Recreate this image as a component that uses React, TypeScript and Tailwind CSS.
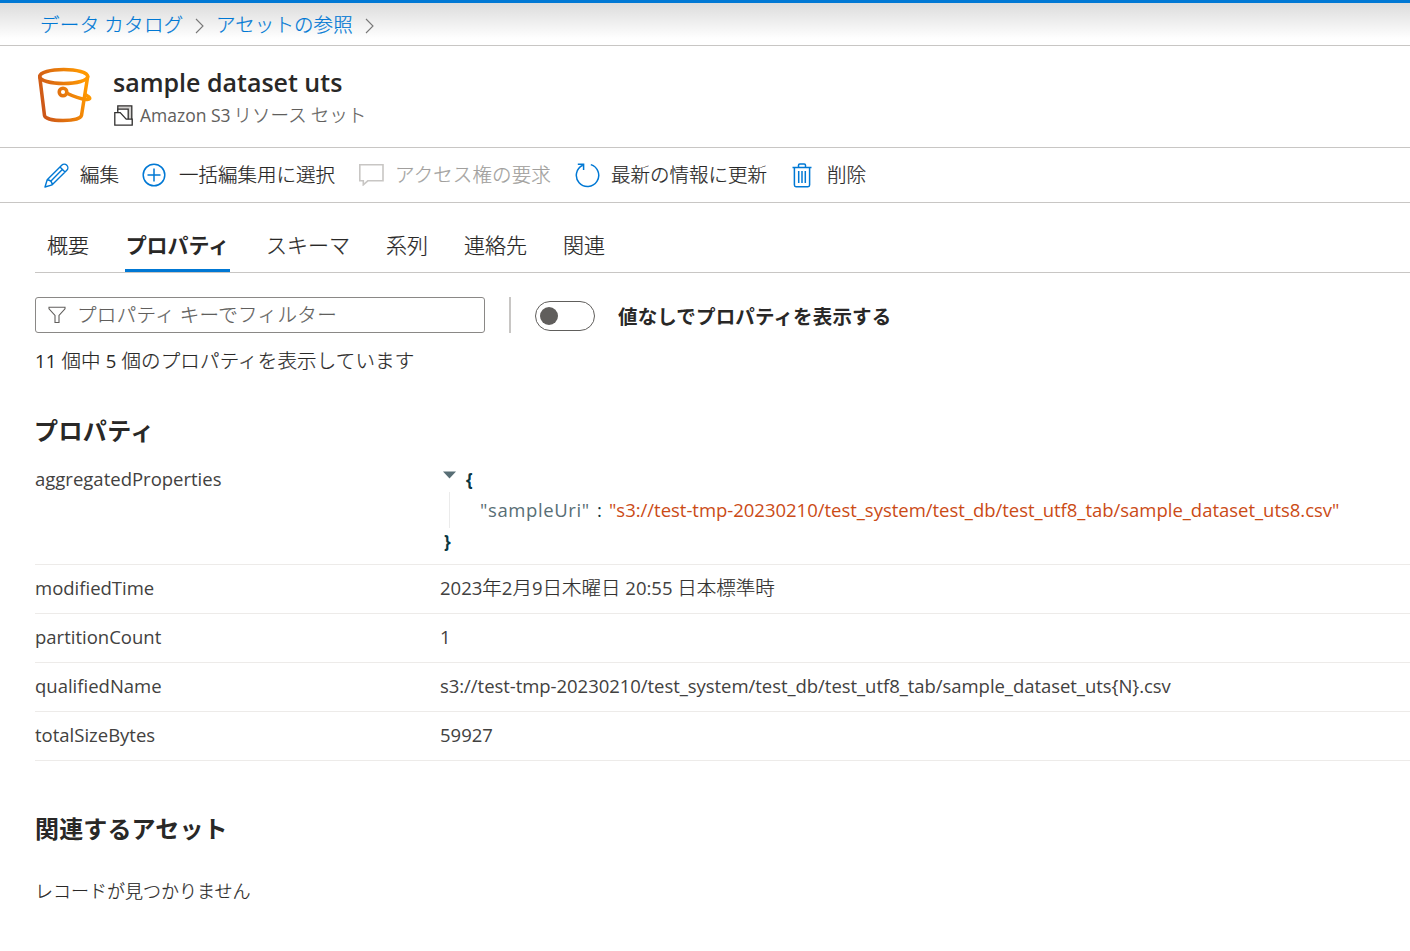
import React from "react";

const JP = "font-['Noto_Sans_CJK_JP',sans-serif]";
const LATIN = "font-['Open_Sans','Noto_Sans_CJK_JP',sans-serif]";
const THIN = "font-light [-webkit-text-stroke:0.2px]";

function Chevron() {
  return (
    <svg width="9" height="16" viewBox="0 0 9 16" fill="none" stroke="#777" strokeWidth="1.1">
      <path d="M1 1l7 7-7 7" />
    </svg>
  );
}

function BucketIcon() {
  return (
    <svg width="55" height="56" viewBox="0 0 55 56" fill="none" stroke="url(#bucket)" strokeWidth="3.5" strokeLinejoin="round" strokeLinecap="round">
      <defs>
        <linearGradient id="bucket" gradientUnits="userSpaceOnUse" x1="0" y1="40" x2="50" y2="25">
          <stop offset="0" stopColor="#c8511b" />
          <stop offset="1" stopColor="#ff9900" />
        </linearGradient>
      </defs>
      <ellipse cx="25.700" cy="9.500" rx="24" ry="7" />
      <path d="M1.700 9.500L6.500 48.500c.8 3 8 5 18.500 5s17.500-2 18.500-5L49.700 9.500" />
      <circle cx="25" cy="25" r="3.800" />
      <path d="M29 26.200c6 3 13 5.600 19 6.200 4 .4 4.800-1 2.200-3l-2.600-1.600" />
    </svg>
  );
}

function ResourceSetIcon() {
  return (
    <svg width="19" height="21" viewBox="0 0 19 21" fill="#fff" stroke="#323130" strokeWidth="1.300">
      <path d="M3.800 6V.8h14v19" fill="#d2d0ce" />
      <path d="M3.800 8V4.200h10.400v12" />
      <path d="M.8 20.200V7.600h5.400l6 6.600h6v6z" />
    </svg>
  );
}

function EditIcon() {
  return (
    <svg width="25" height="25" viewBox="0 0 25 25" fill="none" stroke="#0078d4" strokeWidth="1.400" strokeLinejoin="round">
      <path d="M1 24l2.200-7.200L17.700 2.200a3.550 3.550 0 0 1 5.100 5.100L8.200 21.800zM3.200 16.800c2.900.2 4.800 2.100 5 5M16 4l5 5M18.300 6.600L6.500 18.400" />
    </svg>
  );
}

function AddIcon() {
  return (
    <svg width="24" height="24" viewBox="0 0 24 24" fill="none" stroke="#0078d4" strokeWidth="1.500">
      <circle cx="12" cy="12" r="10.800" />
      <path d="M12 5.500v13M5.500 12h13" />
    </svg>
  );
}

function CommentIcon() {
  return (
    <svg width="25" height="22" viewBox="0 0 25 22" fill="none" stroke="#c8c6c4" strokeWidth="1.600">
      <path d="M.8.800h23.200v16H8.800L4.300 20.800v-4H.8z" />
    </svg>
  );
}

function RefreshIcon() {
  return (
    <svg width="25" height="25" viewBox="0 0 25 25" fill="none" stroke="#0078d4" strokeWidth="1.500">
      <path d="M15.800 1.600A11.200 11.200 0 1 1 7.700 2.200M2.800 1.200h5.800V7" />
    </svg>
  );
}

function DeleteIcon() {
  return (
    <svg width="20" height="25" viewBox="0 0 20 25" fill="none" stroke="#0078d4" strokeWidth="1.500">
      <path d="M.5 4.400h19M6.500 4.400V2.200c0-.8.500-1.300 1.300-1.300h4.400c.8 0 1.300.5 1.300 1.300v2.200M2.400 4.400v17.700c0 1 .6 1.600 1.600 1.600h12c1 0 1.600-.6 1.600-1.600V4.400M6.700 8v12M10 8v12M13.300 8v12" />
    </svg>
  );
}

function FilterIcon() {
  return (
    <svg className="-mt-px" width="18" height="18" viewBox="0 0 18 18" fill="none" stroke="#605e5c" strokeWidth="1.100">
      <path d="M1 1.200h16v1.600l-6 6.700v7H7v-7L1 2.800z" />
    </svg>
  );
}

function Tab({ label, active, className }: { label: string; active?: boolean; className: string }) {
  return (
    <div className={`flex h-[69px] justify-center text-[21px] leading-[83px] whitespace-nowrap ${active ? "border-b-3 border-[#0078d4] font-bold" : THIN} ${className}`}>
      {label}
    </div>
  );
}

function Row({ name, children }: { name: string; children: React.ReactNode }) {
  return (
    <div className={`flex h-[49px] border-b border-[#edebe9] text-[18.5px] leading-[45px] text-[#424140] ${LATIN}`}>
      <div className="w-[405px] shrink-0">{name}</div>
      <div className="whitespace-nowrap">{children}</div>
    </div>
  );
}

function Kanji({ children }: { children: string }) {
  return <span className={`text-[19.5px] leading-none text-[#323130] ${THIN}`}>{children}</span>;
}

export default function App() {
  return (
    <div className={`h-[951px] w-[1410px] overflow-hidden bg-white text-[#292827] ${JP}`}>
      <nav className={`flex h-[46px] items-center border-t-3 border-b border-t-[#0078d4] border-b-[#c8c6c4] bg-linear-to-b from-[#dcdcdc] to-white to-85% pl-10 text-[19.5px] leading-[40px] text-[#0078d4] ${THIN}`}>
        <span className="w-[155px] tracking-[0.350px] whitespace-nowrap">データ カタログ</span>
        <span className="mt-[3px] w-[21px]"><Chevron /></span>
        <span className="w-[149px] tracking-[0.100px] whitespace-nowrap">アセットの参照</span>
        <span className="mt-[3px]"><Chevron /></span>
      </nav>

      <header className="flex h-[102px] border-b border-[#c8c6c4] pt-[21px] pl-[38px]">
        <BucketIcon />
        <div className="ml-[20px]">
          <h1 className={`h-[34px] text-[25px] leading-[31px] font-semibold ${LATIN}`}>sample dataset uts</h1>
          <div className="ml-px flex h-[28px] items-center gap-[7px] text-[#605e5c]">
            <ResourceSetIcon />
            <div className="flex items-baseline gap-[3px] leading-[27px] whitespace-nowrap">
              <span className={`text-[17.5px] ${LATIN}`}>Amazon S3</span>
              <span className={`text-[18.5px] ${THIN}`}>リソース セット</span>
            </div>
          </div>
        </div>
      </header>

      <div className={`flex h-[55px] items-center border-b border-[#c8c6c4] pl-[44px] text-[19.5px] leading-[50px] whitespace-nowrap ${THIN}`}>
        <EditIcon />
        <span className="-mt-[2px] ml-[11px] w-[62px]">編集</span>
        <AddIcon />
        <span className="-mt-[2px] ml-[13px] w-[180px]">一括編集用に選択</span>
        <CommentIcon />
        <span className="-mt-[2px] ml-[11px] w-[180px] tracking-[0.100px] text-[#a19f9d]">アクセス権の要求</span>
        <RefreshIcon />
        <span className="-mt-[2px] ml-[11px] w-[181px]">最新の情報に更新</span>
        <DeleteIcon />
        <span className="-mt-[2px] ml-[15px]">削除</span>
      </div>

      <main className="pl-[35px]">
        <div className="flex h-[70px] border-b border-[#c8c6c4] pl-[12px]">
          <Tab label="概要" className="w-[42px]" />
          <Tab label="プロパティ" active className="ml-[36px] w-[105px]" />
          <Tab label="スキーマ" className="ml-[36px] w-[84px]" />
          <Tab label="系列" className="ml-[36px] w-[42px]" />
          <Tab label="連絡先" className="ml-[36px] w-[63px]" />
          <Tab label="関連" className="ml-[36px] w-[42px]" />
        </div>

        <div className="mt-6 flex h-9 items-center">
          <div className={`flex h-9 w-[450px] items-center gap-[11px] rounded-[3px] border border-[#8a8886] pl-[12px] text-[19.5px] leading-[30px] text-[#605e5c] ${THIN}`}>
            <FilterIcon />
            <span className="-mt-[2px] tracking-[0.350px]">プロパティ キーでフィルター</span>
          </div>
          <div className="ml-6 h-9 w-[2px] bg-[#c8c6c4]" />
          <div className="mt-[2px] ml-6 flex h-[30px] w-[60px] items-center rounded-full border border-[#605e5c] pl-[4px]">
            <div className="size-[18px] rounded-full bg-[#605e5c]" />
          </div>
          <span className="mt-[2px] ml-[23px] text-[19.5px] tracking-[0.150px] font-bold whitespace-nowrap">値なしでプロパティを表示する</span>
        </div>

        <p className={`mt-[12px] h-[31px] text-[19.5px] leading-[30px] tracking-[0.150px] ${THIN}`}>
          <span className={`text-[18.5px] ${LATIN} font-normal [-webkit-text-stroke:0]`}>11 </span>個中
          <span className={`text-[18.5px] ${LATIN} font-normal [-webkit-text-stroke:0]`}> 5 </span>個のプロパティを表示しています
        </p>

        <h2 className="mt-[36px] -ml-px h-[36px] text-[24px] leading-[36px] font-bold tracking-[0.400px]">プロパティ</h2>

        <section className="mt-[7px]">
          <div className={`flex h-[110px] border-b border-[#edebe9] text-[18.5px] text-[#424140] ${LATIN}`}>
            <div className="w-[405px] shrink-0 pt-[8px] leading-[32px]">aggregatedProperties</div>
            <div className="pt-[8px] leading-[32px] whitespace-nowrap text-[#073642]">
              <div className="flex h-[29px]">
                <svg className="mt-[8px] ml-[3px]" width="13" height="8" viewBox="0 0 13 8"><path d="M0 .5h13L6.500 7.500z" fill="#586e75" /></svg>
                <b className="mt-px ml-[10px] text-[17px]">{"{"}</b>
              </div>
              <div className="ml-[9px] flex h-[36px] border-l border-[#ebebeb] pl-[30px] leading-[36px]">
                <span className="w-[109px] tracking-[0.600px] text-[#586e75]">"sampleUri"</span>
                <span className="ml-[8px] w-[12px]">:</span>
                <span className="tracking-[-0.020px] text-[#cb4b16]">"s3://test-tmp-20230210/test_system/test_db/test_utf8_tab/sample_dataset_uts8.csv"</span>
              </div>
              <b className="-mt-[2px] ml-[4px] block text-[17px]">{"}"}</b>
            </div>
          </div>
          <Row name="modifiedTime">
            2023<Kanji>年</Kanji>2<Kanji>月</Kanji>9<Kanji>日木曜日</Kanji> 20:55 <Kanji>日本標準時</Kanji>
          </Row>
          <Row name="partitionCount">1</Row>
          <Row name="qualifiedName"><span className="tracking-[-0.045px]">{"s3://test-tmp-20230210/test_system/test_db/test_utf8_tab/sample_dataset_uts{N}.csv"}</span></Row>
          <Row name="totalSizeBytes">59927</Row>
        </section>

        <h2 className="mt-[50px] h-[36px] text-[24px] leading-[34px] font-bold tracking-[0.150px]">関連するアセット</h2>
        <p className={`mt-[28px] text-[18px] leading-[30px] ${THIN}`}>レコードが見つかりません</p>
      </main>
    </div>
  );
}
